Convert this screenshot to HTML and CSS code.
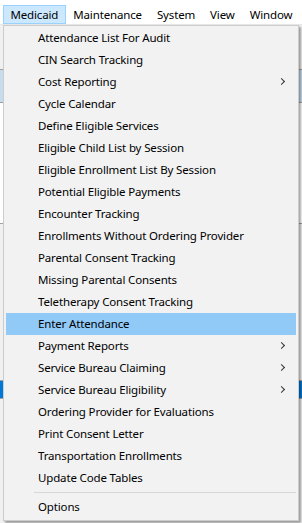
FILE: index.html
```html
<!DOCTYPE html>
<html lang="en">
<head>
    <meta charset="UTF-8">
    <title>Medicaid Menu</title>
    <link rel="stylesheet" href="styles.css">
</head>
<body>
    <div class="janela">
        <div class="barra">
            <span class="barra-item ativo">Medicaid</span>
            <span class="barra-item">Maintenance</span>
            <span class="barra-item">System</span>
            <span class="barra-item">View</span>
            <span class="barra-item">Window</span>
        </div>
        <div class="fundo">
            <div class="bloco cinza"></div>
            <div class="bloco azul"></div>
            <div class="bloco branco"></div>
            <div class="bloco cinza2"></div>
            <div class="bloco selecionado"></div>
        </div>

        <div class="menu">
            <div class="item">Attendance List For Audit</div>
            <div class="item">CIN Search Tracking</div>
            <div class="item sub">Cost Reporting</div>
            <div class="item">Cycle Calendar</div>
            <div class="item">Define Eligible Services</div>
            <div class="item">Eligible Child List by Session</div>
            <div class="item">Eligible Enrollment List By Session</div>
            <div class="item">Potential Eligible Payments</div>
            <div class="item">Encounter Tracking</div>
            <div class="item">Enrollments Without Ordering Provider</div>
            <div class="item">Parental Consent Tracking</div>
            <div class="item">Missing Parental Consents</div>
            <div class="item">Teletherapy Consent Tracking</div>
            <div class="item hover">Enter Attendance</div>
            <div class="item sub">Payment Reports</div>
            <div class="item sub">Service Bureau Claiming</div>
            <div class="item sub">Service Bureau Eligibility</div>
            <div class="item">Ordering Provider for Evaluations</div>
            <div class="item">Print Consent Letter</div>
            <div class="item">Transportation Enrollments</div>
            <div class="item">Update Code Tables</div>
            <div class="separador"></div>
            <div class="item">Options</div>
        </div>
    </div>
</body>
</html>
```

FILE: styles.css
```css
body {
    margin: 0;
    padding: 0;
    font-family: "Segoe UI", "Noto Sans", Arial, sans-serif;
    font-size: 11.5px;
    letter-spacing: -0.15px;
    color: #000;
    background-color: #f0f0f0;
}
.janela {
    position: relative;
    width: 302px;
    height: 523px;
    overflow: hidden;
}
.barra {
    height: 25px;
    background: #fff;
    display: flex;
    align-items: flex-end;
    padding-left: 3px;
    box-sizing: border-box;
    border-bottom: 1px solid #e6e6e6;
    white-space: nowrap;
}
.barra-item {
    height: 19px;
    line-height: 17px;
    padding: 0 6.5px;
    box-sizing: border-box;
    border: 1px solid transparent;
}
.barra-item.ativo {
    background: #cce8ff;
    border-color: #99d1ff;
}
.bloco {
    border-bottom: 1px solid #a0a0a0;
}
.cinza {
    height: 44px;
    background: #f0f0f0;
}
.azul {
    height: 32px;
    background: #c8dcef;
}
.branco {
    height: 120px;
    background: #fff;
}
.cinza2 {
    height: 156px;
    background: #f0f0f0;
}
.selecionado {
    height: 17px;
    background: #0078d7;
}
.menu {
    position: absolute;
    left: 3px;
    top: 25px;
    width: 296px;
    box-sizing: border-box;
    background: #f2f2f2;
    border: 1px solid #cccccc;
    padding: 1px 2px 2px 2px;
    box-shadow: 2px 2px 2px rgba(0, 0, 0, 0.35);
}
.item {
    position: relative;
    height: 22px;
    line-height: 22px;
    padding-left: 32px;
    white-space: nowrap;
}
.item.hover {
    background: #91c9f7;
}
.item.sub::after {
    content: "";
    position: absolute;
    right: 12px;
    top: 8px;
    width: 4px;
    height: 4px;
    border-right: 1px solid #333;
    border-top: 1px solid #333;
    transform: rotate(45deg);
}
.separador {
    height: 1px;
    background: #d7d7d7;
    margin: 3px 0 3px 28px;
}
```
